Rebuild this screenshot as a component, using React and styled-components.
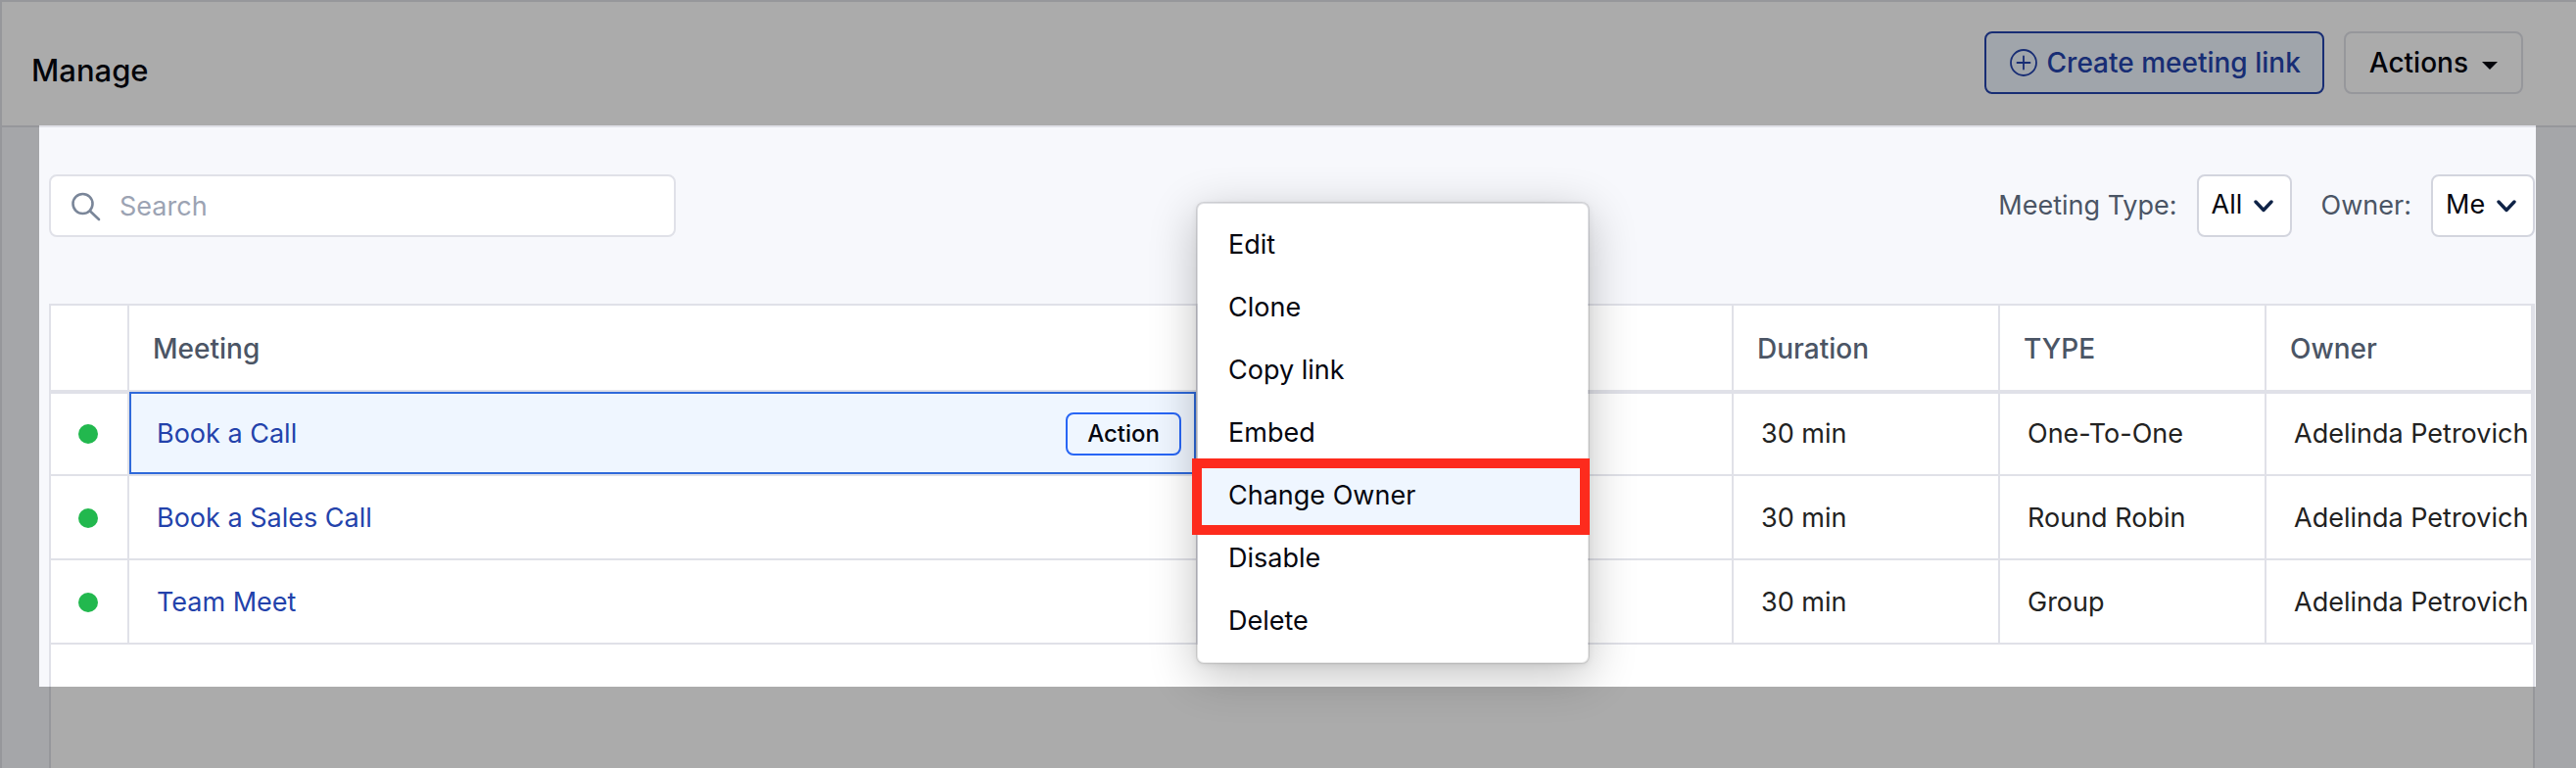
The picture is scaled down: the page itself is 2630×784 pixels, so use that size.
import React from "react";
import styled, { createGlobalStyle, css } from "styled-components";

const GlobalStyle = createGlobalStyle`
  * { box-sizing: border-box; }
  body { margin: 0; background: #f7f8fc; }
  button, input, select { font: inherit; }
`;

const line = "#e0e1e8";
const fontStack = `"Inter", "Liberation Sans", sans-serif`;

const Page = styled.div`
  display: flex;
  overflow: hidden;
  color: #05060f;
  font-family: ${fontStack};
  font-size: 27px;
  line-height: 32px;
`;

const Frame = styled.div`
  flex: 1;
  min-width: 0;
  min-height: 100vh;
  display: flex;
  flex-direction: column;
  border-top: 2px solid ${line};
  border-left: 2px solid ${line};
  background: #f7f8fc;
`;

const Header = styled.header`
  display: flex;
  align-items: flex-start;
  justify-content: space-between;
  padding: 30px 54px 32px 30px;
  background: #fff;
  border-bottom: 2px solid ${line};
`;

const Title = styled.h1`
  margin: 16px 0 0;
  font-size: 31px;
  line-height: 48px;
  font-weight: 500;
`;

const HeaderActions = styled.div`
  display: flex;
  gap: 20px;
`;

const HeaderButton = styled.button`
  display: flex;
  align-items: center;
  gap: 14px;
  height: 64px;
  padding: 0 24px;
  border: 2px solid ${line};
  border-radius: 8px;
  background: #fff;
  color: #05060f;
  font-size: 28px;
  font-weight: 500;
  ${(p) =>
    p.$primary &&
    css`
      gap: 10px;
      padding-right: 22px;
      border-color: #2443ae;
      background: #eff6ff;
      color: #2443ae;
    `}
`;

const Highlight = styled.main`
  position: relative;
  z-index: 1;
  margin: -2px 41px 0 38px;
  padding: 48px 1px 0 10px;
  border-top: 2px solid ${line};
  background: #f7f8fc;
  box-shadow: 0 0 0 9999px rgba(0, 0, 0, 0.33);
`;

const Toolbar = styled.div`
  display: flex;
  align-items: center;
  justify-content: space-between;
  margin-bottom: 68px;
`;

const SearchBox = styled.label`
  display: flex;
  align-items: center;
  gap: 18px;
  width: 640px;
  height: 64px;
  padding: 0 20px;
  border: 2px solid ${line};
  border-radius: 8px;
  background: #fff;
`;

const SearchInput = styled.input`
  flex: 1;
  min-width: 0;
  padding: 2px 0 0;
  border: 0;
  outline: 0;
  background: transparent;
  &::placeholder {
    color: #9ca3b3;
    opacity: 1;
  }
`;

const Filters = styled.div`
  display: flex;
  align-items: center;
  gap: 30px;
`;

const Filter = styled.label`
  display: flex;
  align-items: center;
  gap: 20px;
  color: #4b5565;
`;

const SelectWrap = styled.span`
  display: grid;
  align-items: center;
  color: #0f2347;
  > * {
    grid-area: 1 / 1;
  }
  svg {
    justify-self: end;
    margin-right: 19px;
    pointer-events: none;
  }
`;

const Select = styled.select`
  appearance: none;
  height: 64px;
  padding: 0 48px 2px 13px;
  border: 2px solid #d3d5de;
  border-radius: 8px;
  background: #fff;
  color: #05060f;
`;

const Panel = styled.div`
  padding-bottom: 43px;
  border: solid ${line};
  border-width: 0 2px;
  background: #fff;
`;

const PanelRest = styled.div`
  flex: 1;
  margin: 0 42px 0 48px;
  border: solid ${line};
  border-width: 0 2px;
  background: #fff;
`;

const Table = styled.table`
  width: 100%;
  table-layout: fixed;
  border-collapse: separate;
  border-spacing: 0;
`;

const Col = styled.col`
  width: ${(p) => p.$width};
`;

const HeadCell = styled.th`
  height: 90px;
  padding: 2px 0 0 24px;
  border: solid ${line};
  border-width: 2px 2px 2px 0;
  color: #4b5565;
  font-size: 28px;
  font-weight: 500;
  text-align: left;
`;

const Cell = styled.td`
  height: 86px;
  padding: ${(p) => (p.$status ? "2px 2px 0 0" : "2px 0 0 28px")};
  border: solid ${line};
  border-width: 0 2px 2px 0;
  color: #222;
  white-space: nowrap;
  tr:first-child > & {
    padding-top: 0;
    border-top-width: 2px;
  }
  ${(p) =>
    p.$selected &&
    css`
      &&& {
        position: relative;
        padding-top: 2px;
        border-top-width: 0;
        background: #eff6ff;
        box-shadow: inset 0 0 0 2px #2f69da;
      }
    `}
`;

const StatusDot = styled.span`
  display: block;
  width: 20px;
  height: 20px;
  margin: 0 auto;
  border-radius: 50%;
  background: #22b84e;
`;

const MeetingLine = styled.div`
  display: flex;
  align-items: center;
  justify-content: space-between;
  padding-right: 15px;
`;

const MeetingLink = styled.a`
  color: #2342ab;
  text-decoration: none;
`;

const RowAction = styled.button`
  height: 44px;
  padding: 0 20px;
  border: 2px solid #2866f5;
  border-radius: 8px;
  background: #eff6ff;
  color: #05060f;
  font-size: 24px;
  font-weight: 500;
  line-height: 28px;
`;

const Menu = styled.ul`
  position: absolute;
  z-index: 2;
  top: -194px;
  left: 100%;
  width: 402px;
  margin: 0;
  padding: 10px 0;
  list-style: none;
  border: 2px solid rgba(0, 0, 0, 0.1);
  border-radius: 8px;
  background: #fff;
  background-clip: padding-box;
  box-shadow: 0 12px 48px rgba(0, 0, 0, 0.24), 0 2px 6px rgba(0, 0, 0, 0.06);
`;

const MenuItem = styled.li`
  position: relative;
  background: ${(p) => (p.$current ? "#eff6ff" : "transparent")};
  ${(p) =>
    p.$current &&
    css`
      &::after {
        content: "";
        position: absolute;
        inset: -6px -2px -8px -6px;
        border: 10px solid #fd2b1d;
        pointer-events: none;
      }
    `}
`;

const MenuButton = styled.button`
  display: block;
  width: 100%;
  height: 64px;
  padding: 0 31px;
  border: 0;
  background: transparent;
  color: #05060f;
  text-align: left;
`;

const SearchIcon = () => (
  <svg width="32" height="32" viewBox="0 0 32 32" fill="none" stroke="#7a8699" strokeWidth="2.6" strokeLinecap="round" aria-hidden="true">
    <circle cx="12.5" cy="14" r="10" />
    <path d="M20 21.500l9 8.500" />
  </svg>
);

const PlusIcon = () => (
  <svg width="28" height="28" viewBox="0 0 28 28" fill="none" stroke="currentColor" strokeWidth="1.8" strokeLinecap="round" aria-hidden="true">
    <circle cx="14" cy="14" r="13" />
    <path d="M14 7.500v13M7.500 14h13" />
  </svg>
);

const CaretIcon = () => (
  <svg width="16" height="18" viewBox="0 0 16 18" fill="currentColor" aria-hidden="true">
    <path d="M0 8h16l-8 8z" />
  </svg>
);

const ChevronIcon = () => (
  <svg width="20" height="16" viewBox="0 0 20 16" fill="none" stroke="currentColor" strokeWidth="3.4" strokeLinecap="round" strokeLinejoin="round" aria-hidden="true">
    <path d="M2 4l8 8.500 8-8.500" />
  </svg>
);

const meetings = [
  { name: "Book a Call", duration: "30 min", type: "One-To-One", owner: "Adelinda Petrovich", selected: true },
  { name: "Book a Sales Call", duration: "30 min", type: "Round Robin", owner: "Adelinda Petrovich" },
  { name: "Team Meet", duration: "30 min", type: "Group", owner: "Adelinda Petrovich" },
];

const menuItems = ["Edit", "Clone", "Copy link", "Embed", "Change Owner", "Disable", "Delete"];

function FilterSelect({ id, label, value }) {
  return (
    <Filter htmlFor={id}>
      {label}
      <SelectWrap>
        <Select id={id} defaultValue={value}>
          <option>{value}</option>
        </Select>
        <ChevronIcon />
      </SelectWrap>
    </Filter>
  );
}

function ActionMenu() {
  return (
    <Menu>
      {menuItems.map((item) => (
        <MenuItem key={item} $current={item === "Change Owner"}>
          <MenuButton type="button">{item}</MenuButton>
        </MenuItem>
      ))}
    </Menu>
  );
}

function MeetingRow({ meeting }) {
  return (
    <tr>
      <Cell $status>
        <StatusDot />
      </Cell>
      <Cell $selected={meeting.selected}>
        <MeetingLine>
          <MeetingLink href="#">{meeting.name}</MeetingLink>
          {meeting.selected && <RowAction type="button">Action</RowAction>}
        </MeetingLine>
        {meeting.selected && <ActionMenu />}
      </Cell>
      <Cell />
      <Cell>{meeting.duration}</Cell>
      <Cell>{meeting.type}</Cell>
      <Cell>{meeting.owner}</Cell>
    </tr>
  );
}

export default function App() {
  return (
    <Page>
      <GlobalStyle />
      <Frame>
        <Header>
          <Title>Manage</Title>
          <HeaderActions>
            <HeaderButton type="button" $primary>
              <PlusIcon />
              Create meeting link
            </HeaderButton>
            <HeaderButton type="button">
              Actions
              <CaretIcon />
            </HeaderButton>
          </HeaderActions>
        </Header>
        <Highlight>
          <Toolbar>
            <SearchBox>
              <SearchIcon />
              <SearchInput type="text" placeholder="Search" aria-label="Search" />
            </SearchBox>
            <Filters>
              <FilterSelect id="meeting-type" label="Meeting Type:" value="All" />
              <FilterSelect id="owner" label="Owner:" value="Me" />
            </Filters>
          </Toolbar>
          <Panel>
            <Table>
              <colgroup>
                <Col $width="80px" />
                <Col />
                <Col $width="547px" />
                <Col $width="272px" />
                <Col $width="272px" />
                <Col $width="272px" />
              </colgroup>
              <thead>
                <tr>
                  <HeadCell />
                  <HeadCell>Meeting</HeadCell>
                  <HeadCell />
                  <HeadCell>Duration</HeadCell>
                  <HeadCell>TYPE</HeadCell>
                  <HeadCell>Owner</HeadCell>
                </tr>
              </thead>
              <tbody>
                {meetings.map((m) => (
                  <MeetingRow key={m.name} meeting={m} />
                ))}
              </tbody>
            </Table>
          </Panel>
        </Highlight>
        <PanelRest />
      </Frame>
    </Page>
  );
}
